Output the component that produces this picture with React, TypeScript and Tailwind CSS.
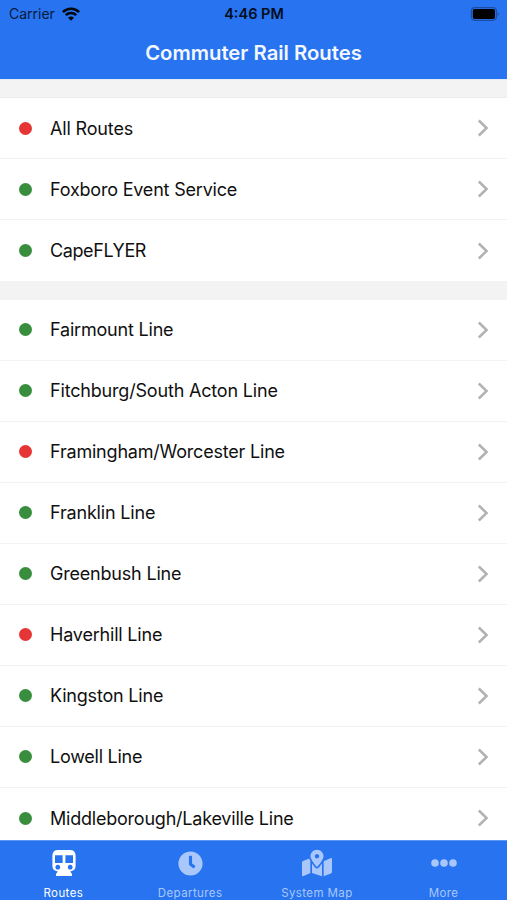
import type { ReactNode } from 'react';
import { FaClock, FaMapMarkedAlt } from 'react-icons/fa';

type Route = { name: string; alert?: boolean; tracking: string };

const services: Route[] = [
  { name: 'All Routes', alert: true, tracking: 'tracking-[-0.16px]' },
  { name: 'Foxboro Event Service', tracking: 'tracking-[-0.2px]' },
  { name: 'CapeFLYER', tracking: 'tracking-[-0.4px]' },
];

const lines: Route[] = [
  { name: 'Fairmount Line', tracking: 'tracking-[-0.2px]' },
  { name: 'Fitchburg/South Acton Line', tracking: 'tracking-[-0.18px]' },
  { name: 'Framingham/Worcester Line', alert: true, tracking: 'tracking-[-0.2px]' },
  { name: 'Franklin Line', tracking: 'tracking-[-0.18px]' },
  { name: 'Greenbush Line', tracking: 'tracking-[-0.2px]' },
  { name: 'Haverhill Line', alert: true, tracking: 'tracking-[-0.2px]' },
  { name: 'Kingston Line', tracking: 'tracking-[-0.2px]' },
  { name: 'Lowell Line', tracking: 'tracking-[-0.25px]' },
  { name: 'Middleborough/Lakeville Line', tracking: 'tracking-[-0.22px]' },
];

function RouteRow({ route }: { route: Route }) {
  return (
    <li className="flex h-[61.05px] shrink-0 items-center border-b border-[#f3f3f3] pr-[18px] pl-[19px] last:border-b-0">
      <span className={`size-[13px] rounded-full ${route.alert ? 'bg-[#e53535]' : 'bg-[#388e3c]'}`} />
      <span className={`ml-[18px] flex-1 text-[18px] whitespace-nowrap text-[#101010] ${route.tracking}`}>{route.name}</span>
      <svg className="h-[18px] w-3" viewBox="0 0 12 18" fill="none" stroke="#b2b2b2" strokeWidth="2.5">
        <path d="M1.8 1.5 L9.6 9 L1.8 16.5" />
      </svg>
    </li>
  );
}

function Tab({ label, active, children }: { label: string; active?: boolean; children: ReactNode }) {
  return (
    <button className={`flex flex-1 flex-col items-center pt-2 ${active ? 'text-white' : 'text-[#a9c7fb]'}`}>
      <span className="flex h-7 shrink-0 items-center justify-center pl-px">{children}</span>
      <span className="mt-2 shrink-0 text-[11.5px] leading-4 tracking-[0.4px]">{label}</span>
    </button>
  );
}

function TrainIcon() {
  return (
    <svg className="h-[26px] w-6" viewBox="0 0 24 26" fill="currentColor">
      <path
        fillRule="evenodd"
        d="M6 0 H18 Q23.6 0 23.6 5.6 V16 Q23.6 20.8 18.2 21.4 L20 24 V26 H4 V24 L5.8 21.4 Q0.4 20.8 0.4 16 V5.6 Q0.4 0 6 0 Z M3 5.2 V13 H10.6 V5.2 Z M13.4 5.2 V13 H21 V5.2 Z M5.8 14.8 a2.4 2.4 0 1 0 0.01 0 Z M18.2 14.8 a2.4 2.4 0 1 0 0.01 0 Z"
      />
    </svg>
  );
}

export default function App() {
  return (
    <div className="flex h-[900px] w-[507px] flex-col overflow-hidden bg-[#f3f3f3] font-['Inter','Liberation_Sans',sans-serif]">
      <header className="h-[79px] shrink-0 bg-[#2873ef]">
        <div className="grid h-[27px] grid-cols-3 items-center pr-[7px] pl-[9px] text-[14px] text-[#061a3c]">
          <div className="flex items-center gap-[7px]">
            <span>Carrier</span>
            <svg className="h-[14px] w-[18px]" viewBox="0 0 18 14" fill="none" stroke="#02060f" strokeWidth="2.5">
              <path d="M0.9 5.1 A11.6 11.6 0 0 1 17.1 5.1" />
              <path d="M3.8 8.2 A7.4 7.4 0 0 1 14.2 8.2" />
              <path d="M9 13.8 L6 10.8 A4.2 4.2 0 0 1 12 10.8 Z" fill="#02060f" stroke="none" />
            </svg>
          </div>
          <span className="pr-px text-center text-[14.5px] font-semibold text-[#030d20]">4:46 PM</span>
          <svg className="h-[14px] w-[30px] justify-self-end" viewBox="0 0 30 14">
            <rect x="1.4" y="0.7" width="25" height="12.6" rx="3.5" fill="none" stroke="#1b4ea3" strokeWidth="1.2" />
            <rect x="2.8" y="2" width="22.2" height="10" rx="2" fill="#000" />
            <path d="M27.6 5 Q30 7 27.6 9 Z" fill="#1b4ea3" />
          </svg>
        </div>
        <h1 className="text-center text-[20.3px] leading-[51px] font-semibold text-[#f3f8ff]">Commuter Rail Routes</h1>
      </header>
      <main className="flex min-h-0 flex-1 flex-col gap-[18.4px] overflow-hidden border-t border-[#e3ebf7] pt-[17px]">
        <ul className="shrink-0 border-t border-[#ececec] bg-white">
          {services.map((route) => <RouteRow key={route.name} route={route} />)}
        </ul>
        <ul className="shrink-0 bg-white">
          {lines.map((route) => <RouteRow key={route.name} route={route} />)}
        </ul>
      </main>
      <nav className="flex h-[60px] shrink-0 border-t border-[#5b95f5] bg-[#2873ef]">
        <Tab label="Routes" active><TrainIcon /></Tab>
        <Tab label="Departures"><FaClock className="size-[25px]" /></Tab>
        <Tab label="System Map"><FaMapMarkedAlt className="size-[30px]" /></Tab>
        <Tab label="More">
          <svg className="h-2 w-[26px]" viewBox="0 0 26 8" fill="currentColor">
            <circle cx="4" cy="4" r="3.8" />
            <circle cx="13" cy="4" r="3.8" />
            <circle cx="22" cy="4" r="3.8" />
          </svg>
        </Tab>
      </nav>
    </div>
  );
}
